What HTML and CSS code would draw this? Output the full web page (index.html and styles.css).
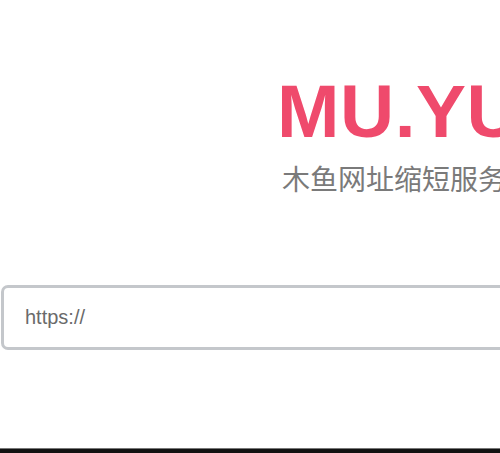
FILE: index.html
```html
<!DOCTYPE html>
<html lang="zh">
<head>
<meta charset="utf-8">
<title>MU.YU</title>
<link rel="stylesheet" href="styles.css">
</head>
<body>
<div class="page">
  <main class="main">
    <header class="brand">
      <h1 class="title">MU.YU</h1>
      <p class="subtitle">木鱼网址缩短服务</p>
    </header>
    <div class="field">
      <input class="url-input" type="text" placeholder="https://">
    </div>
  </main>
  <div class="bottom-bar"></div>
</div>
</body>
</html>
```
FILE: styles.css
```css
html, body {
  margin: 0;
  padding: 0;
  background: #fff;
  overflow: hidden;
}
.page {
  width: 500px;
  height: 453px;
  display: flex;
  flex-direction: column;
  overflow: hidden;
}
.main {
  flex: 1;
  display: flex;
  flex-direction: column;
}
.brand {
  padding-left: 277px;
  padding-top: 68px;
  white-space: nowrap;
}
.title {
  margin: 0;
  font-family: "Liberation Sans", Arial, sans-serif;
  font-weight: 700;
  font-size: 75px;
  line-height: 86px;
  color: #ef4a6c;
  letter-spacing: 0.5px;
}
.subtitle {
  margin: 7px 0 0 5px;
  font-family: "Noto Sans CJK SC", sans-serif;
  font-size: 28px;
  line-height: 34px;
  color: #7a7a7a;
}
.field {
  margin-top: 90px;
  margin-left: 1px;
  width: 700px;
}
.url-input {
  box-sizing: border-box;
  width: 100%;
  height: 65px;
  border: 3px solid #c4c7cb;
  border-radius: 7px;
  padding: 0 0 0 21px;
  font-family: "Liberation Sans", Arial, sans-serif;
  font-size: 20px;
  color: #555;
  background: #fff;
  outline: none;
}
.url-input::placeholder {
  color: #6a6a6a;
}
.bottom-bar {
  height: 4px;
  background: #121212;
  border-top: 1px solid #777;
}
```
